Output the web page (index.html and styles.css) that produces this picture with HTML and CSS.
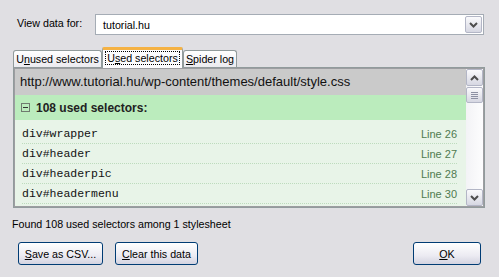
FILE: index.html
```html
<!DOCTYPE html>
<html>
<head>
    <link rel="stylesheet" href="styles.css">
</head>
<body>
<div class="dialog">
    <div class="site-row">
        <label class="site-label">View data for:</label>
        <div class="combo">
            <span class="combo-text">tutorial.hu</span>
            <span class="sb-btn combo-btn">
                <svg width="9" height="6" viewBox="0 0 9 6"><path d="M1 1 L4.5 4.5 L8 1" fill="none" stroke="#4d4d4d" stroke-width="2"/></svg>
            </span>
        </div>
    </div>

    <div class="tabs">
        <div class="tab tab-unused">U<u>n</u>used selectors</div>
        <div class="tab tab-used active"><span class="focus">U<u>s</u>ed selectors</span></div>
        <div class="tab tab-spider"><u>S</u>pider log</div>
    </div>

    <div class="panel">
        <div class="listbox">
            <div class="list-main">
                <div class="sheet-url">http://www.tutorial.hu/wp-content/themes/default/style.css</div>
                <div class="group-head">
                    <span class="collapse"></span>
                    <span>108 used selectors:</span>
                </div>
                <div class="rows">
                    <div class="row"><span class="sel">div#wrapper</span><span class="line">Line 26</span></div>
                    <div class="row"><span class="sel">div#header</span><span class="line">Line 27</span></div>
                    <div class="row"><span class="sel">div#headerpic</span><span class="line">Line 28</span></div>
                    <div class="row"><span class="sel">div#headermenu</span><span class="line">Line 30</span></div>
                </div>
            </div>
            <div class="scrollbar">
                <span class="sb-btn">
                    <svg width="9" height="6" viewBox="0 0 9 6"><path d="M1 5 L4.5 1.5 L8 5" fill="none" stroke="#4d4d4d" stroke-width="2"/></svg>
                </span>
                <span class="sb-btn thumb"><i></i><i></i><i></i><i></i></span>
                <span class="track"></span>
                <span class="sb-btn">
                    <svg width="9" height="6" viewBox="0 0 9 6"><path d="M1 1 L4.5 4.5 L8 1" fill="none" stroke="#4d4d4d" stroke-width="2"/></svg>
                </span>
            </div>
        </div>
    </div>

    <p class="status">Found 108 used selectors among 1 stylesheet</p>

    <div class="buttons">
        <button class="btn btn-csv"><u>S</u>ave as CSV...</button>
        <button class="btn btn-clear"><u>C</u>lear this data</button>
        <button class="btn btn-ok"><u>O</u>K</button>
    </div>
</div>
</body>
</html>
```

FILE: styles.css
```css
body {
    margin: 0;
    background: #e0dfe3;
    font-family: "Liberation Sans", Arial, sans-serif;
    font-size: 10.7px;
    color: #000;
}

.dialog {
    padding: 14px 14px 0 13px;
}

.site-row {
    display: flex;
    align-items: center;
    height: 21px;
}
.site-label {
    width: 78px;
    padding-left: 4px;
    margin-top: -3px;
}
.combo {
    flex: 1;
    height: 19px;
    border: 1px solid #a5acb5;
    background: white;
    display: flex;
    align-items: center;
    justify-content: space-between;
    margin-right: 1px;
}
.combo-text {
    padding-left: 7px;
}
.combo-btn {
    margin-right: 1px;
    height: 17px;
}

.tabs {
    display: flex;
    align-items: flex-end;
    margin-top: 12px;
    height: 20px;
    position: relative;
    z-index: 1;
}
.tab {
    box-sizing: border-box;
    height: 17px;
    line-height: 16px;
    white-space: nowrap;
    text-align: center;
    border: 1px solid #919b9c;
    border-bottom: none;
    border-radius: 3px 3px 0 0;
    background: linear-gradient(#ffffff, #ecebf0);
}
.tab-unused {
    width: 89px;
}
.tab-used {
    width: 81px;
}
.tab-spider {
    width: 54px;
}
.tab.active {
    height: 21px;
    line-height: 16px;
    margin-bottom: -1px;
    background: #fcfcfe;
    border-top: 3px solid #f5b244;
    border-radius: 2px 2px 0 0;
}
.tab.active .focus {
    outline: 1px dotted #000;
    padding: 0 1px;
}

.panel {
    width: 470px;
    border: 1px solid #919b9c;
    background: #fcfcfe;
}
.listbox {
    display: flex;
    height: 137px;
    border: 1px solid #9d9da1;
    overflow: hidden;
}
.list-main {
    flex: 1;
    background: #e8f4e8;
}
.sheet-url {
    height: 26px;
    line-height: 25px;
    padding-left: 5px;
    background: #cacaca;
    font-size: 13px;
    color: #111;
}
.group-head {
    height: 25px;
    display: flex;
    align-items: center;
    gap: 6px;
    padding-left: 6px;
    background: #bbecbd;
    font-weight: bold;
    font-size: 12px;
    color: #222;
}
.collapse {
    width: 7px;
    height: 7px;
    border: 1px solid #6f7a6f;
    position: relative;
}
.collapse::after {
    content: "";
    position: absolute;
    left: 1px;
    top: 3px;
    width: 5px;
    height: 1px;
    background: #333;
}
.rows {
    padding: 4px 9px 0 7px;
}
.row {
    display: flex;
    justify-content: space-between;
    align-items: center;
    height: 19px;
    border-bottom: 1px dotted #bddbbd;
}
.sel {
    font-family: "Liberation Mono", "Courier New", monospace;
    font-size: 11.5px;
    color: #111;
}
.line {
    color: #4f7a4f;
    font-size: 11px;
}

.scrollbar {
    width: 17px;
    display: flex;
    flex-direction: column;
    background: linear-gradient(90deg, #f3f3f6, #fdfdfe);
}
.sb-btn {
    width: 15px;
    height: 15px;
    border: 1px solid #b3b6c6;
    border-radius: 2px;
    background: linear-gradient(#fafafc, #d6d7e2);
    display: flex;
    align-items: center;
    justify-content: center;
}
.thumb {
    height: 14px;
    margin-top: 1px;
    flex-direction: column;
    gap: 1px;
}
.thumb i {
    display: block;
    width: 7px;
    height: 1px;
    background: #8d90a3;
}
.track {
    flex: 1;
}

.status {
    margin: 10px 0 0 -1px;
}

.buttons {
    display: flex;
    margin-top: 12px;
    padding-left: 5px;
}
.btn {
    height: 23px;
    border: 1px solid #003c74;
    border-radius: 3px;
    background: linear-gradient(#ffffff, #ecebf2 60%, #d3d3e0);
    font-family: "Liberation Sans", Arial, sans-serif;
    font-size: 10.7px;
    color: #000;
    padding: 0;
}
.btn-csv {
    width: 85px;
}
.btn-clear {
    width: 83px;
    margin-left: 12px;
}
.btn-ok {
    width: 68px;
    margin-left: auto;
    margin-right: 4px;
}
```
